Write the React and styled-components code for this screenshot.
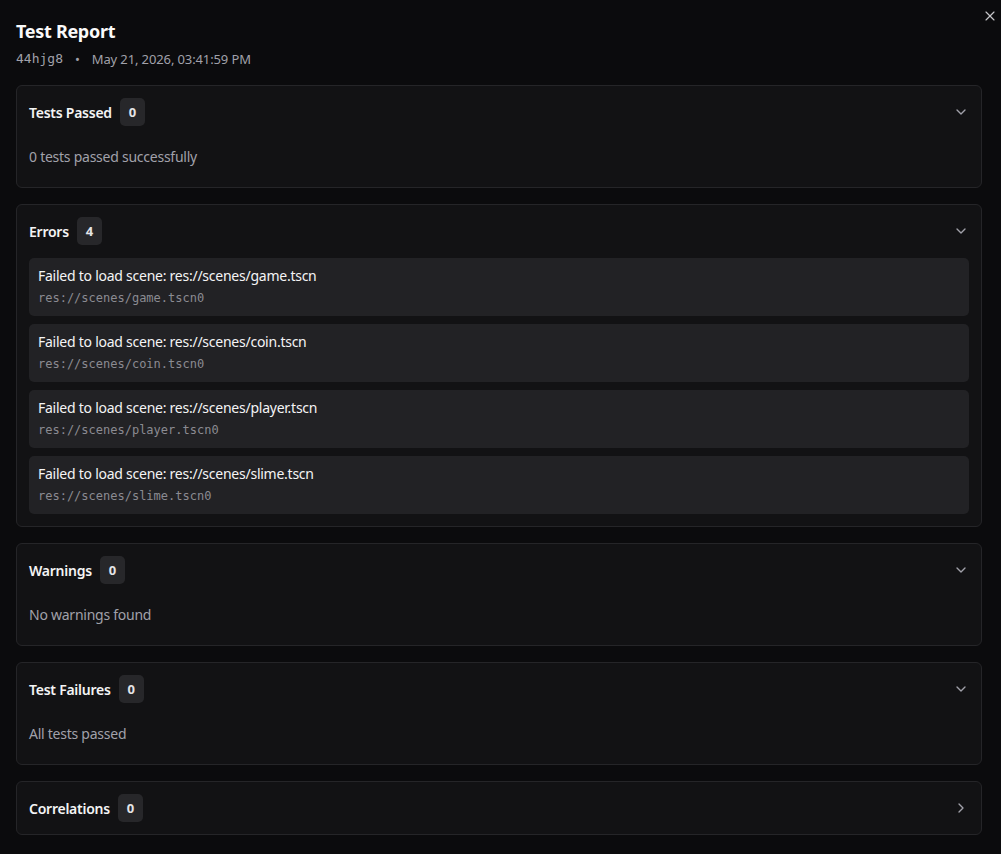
import React from "react";
import styled, { createGlobalStyle } from "styled-components";
import { ChevronDown, ChevronRight, X } from "lucide-react";

const GlobalStyle = createGlobalStyle`
  html, body { margin: 0; padding: 0; background: #0b0b0d; }
  body { font-family: "Noto Sans", "Open Sans", sans-serif; color: #f4f4f5; letter-spacing: -0.25px; }
  * { box-sizing: border-box; }
`;

const Page = styled.div`
  position: relative;
  min-height: 854px;
  padding: 17px 19px 16px 16px;
  background: #0b0b0d;
`;

const CloseButton = styled.button`
  position: absolute;
  top: 8px;
  right: 3px;
  width: 16px;
  height: 16px;
  padding: 0;
  border: 0;
  background: transparent;
  color: #c4c4c8;
  display: flex;
  align-items: center;
  justify-content: center;
`;

const Title = styled.h1`
  margin: 0;
  font-size: 18px;
  line-height: 28px;
  font-weight: 700;
  letter-spacing: -0.3px;
  color: #fafafa;
`;

const Meta = styled.div`
  display: flex;
  align-items: center;
  gap: 12px;
  font-size: 13px;
  line-height: 28px;
  letter-spacing: -0.12px;
  color: #a1a1aa;
`;

const Mono = styled.span`
  font-family: "DejaVu Sans Mono", monospace;
  letter-spacing: 0;
`;

const Stack = styled.div`
  display: flex;
  flex-direction: column;
  gap: 16px;
  margin-top: 12px;
`;

const Card = styled.section`
  background: #121214;
  border: 1px solid #252528;
  border-radius: 6px;
`;

const Header = styled.div`
  display: flex;
  align-items: center;
  height: 52px;
  padding: 0 12px;
  gap: 8px;
`;

const CardTitle = styled.span`
  font-size: 14px;
  font-weight: 600;
  color: #f4f4f5;
`;

const Badge = styled.span`
  display: inline-flex;
  align-items: center;
  justify-content: center;
  min-width: 25px;
  height: 28px;
  padding: 0 8px;
  border-radius: 5px;
  background: #27272a;
  font-size: 13px;
  font-weight: 700;
  color: #e4e4e7;
`;

const Chevron = styled.span`
  margin-left: auto;
  display: flex;
  color: #a1a1aa;
`;

const Body = styled.div`
  padding: 9px 12px 20px;
  font-size: 14px;
  line-height: 20px;
  color: #a1a1aa;
`;

const ErrorList = styled.div`
  display: flex;
  flex-direction: column;
  gap: 8px;
  padding: 1px 12px 12px;
`;

const ErrorItem = styled.div`
  background: #222225;
  border-radius: 5px;
  padding: 8px 9px 10px;
`;

const ErrorTitle = styled.div`
  font-size: 14px;
  line-height: 20px;
  color: #f4f4f5;
`;

const ErrorPath = styled.div`
  margin-top: 4px;
  font-family: "DejaVu Sans Mono", monospace;
  letter-spacing: 0;
  font-size: 12px;
  line-height: 16px;
  color: #8b8b92;
`;

const sections = [
  { title: "Tests Passed", count: 0, text: "0 tests passed successfully", open: true },
  {
    title: "Errors",
    count: 4,
    open: true,
    errors: ["game", "coin", "player", "slime"],
  },
  { title: "Warnings", count: 0, text: "No warnings found", open: true },
  { title: "Test Failures", count: 0, text: "All tests passed", open: true },
  { title: "Correlations", count: 0, open: false },
];

export default function App() {
  return (
    <>
      <GlobalStyle />
      <Page>
        <CloseButton aria-label="Close">
          <X size={16} strokeWidth={1.75} />
        </CloseButton>
        <Title>Test Report</Title>
        <Meta>
          <Mono>44hjg8</Mono>
          <span>•</span>
          <span>May 21, 2026, 03:41:59 PM</span>
        </Meta>
        <Stack>
          {sections.map((s) => (
            <Card key={s.title}>
              <Header>
                <CardTitle>{s.title}</CardTitle>
                <Badge>{s.count}</Badge>
                <Chevron>
                  {s.open ? <ChevronDown size={16} /> : <ChevronRight size={16} />}
                </Chevron>
              </Header>
              {s.text && <Body>{s.text}</Body>}
              {s.errors && (
                <ErrorList>
                  {s.errors.map((e) => (
                    <ErrorItem key={e}>
                      <ErrorTitle>Failed to load scene: res://scenes/{e}.tscn</ErrorTitle>
                      <ErrorPath>res://scenes/{e}.tscn0</ErrorPath>
                    </ErrorItem>
                  ))}
                </ErrorList>
              )}
            </Card>
          ))}
        </Stack>
      </Page>
    </>
  );
}
